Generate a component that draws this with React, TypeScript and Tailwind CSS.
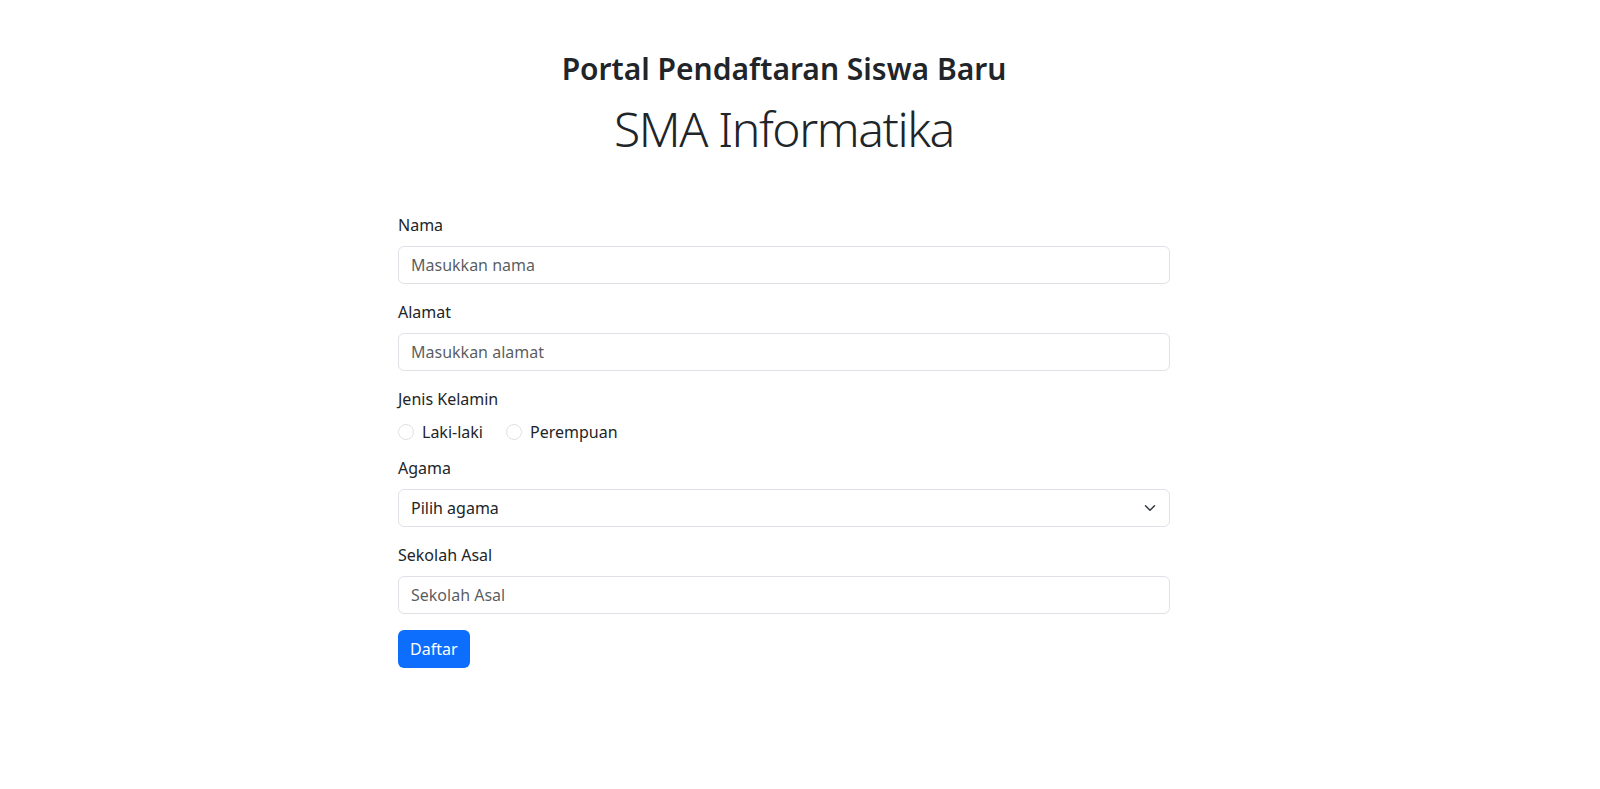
import { useState } from 'react';

const font = { fontFamily: '"Noto Sans", "Liberation Sans", sans-serif' };

function Field({ label, placeholder }: { label: string; placeholder: string }) {
  return (
    <div className="mb-4">
      <label className="mb-[9px] block text-base leading-6 text-[#212529]">{label}</label>
      <input
        type="text"
        placeholder={placeholder}
        className="block h-[38px] w-full rounded-md border border-[#dee2e6] bg-white px-3 text-base text-[#212529] outline-none placeholder:text-[#212529bf]"
      />
    </div>
  );
}

export default function App() {
  const [gender, setGender] = useState('');

  return (
    <div className="min-h-screen bg-white pr-[32px] text-[#212529]" style={font}>
      <div className="mx-auto w-[772px] pt-[49px]">
        <div className="text-center">
          <h3 className="text-[30px] font-semibold leading-[40px]">Portal Pendaftaran Siswa Baru</h3>
          <h1 className="mt-[11px] text-[48px] font-light leading-[58px] tracking-[-1.4px]">SMA Informatika</h1>
        </div>

        <form className="mt-[55px]" onSubmit={(e) => e.preventDefault()}>
          <Field label="Nama" placeholder="Masukkan nama" />
          <Field label="Alamat" placeholder="Masukkan alamat" />

          <div className="mb-3">
            <label className="mb-[9px] block text-base leading-6">Jenis Kelamin</label>
            <div className="flex h-6 items-center">
              {['Laki-laki', 'Perempuan'].map((g) => (
                <label key={g} className="mr-[23px] flex items-center text-base leading-6">
                  <input
                    type="radio"
                    name="gender"
                    checked={gender === g}
                    onChange={() => setGender(g)}
                    className="mr-2 h-4 w-4 appearance-none rounded-full border border-[#dee2e6] bg-white checked:border-[5px] checked:border-[#0d6efd]"
                  />
                  {g}
                </label>
              ))}
            </div>
          </div>

          <div className="mb-4">
            <label className="mb-[9px] block text-base leading-6">Agama</label>
            <div className="relative">
              <select
                defaultValue=""
                className="block h-[38px] w-full appearance-none rounded-md border border-[#dee2e6] bg-white pl-3 pr-9 text-base text-[#212529] outline-none"
              >
                <option value="">Pilih agama</option>
                <option>Islam</option>
                <option>Kristen</option>
                <option>Katolik</option>
                <option>Hindu</option>
                <option>Buddha</option>
                <option>Konghucu</option>
              </select>
              <svg
                viewBox="0 0 16 16"
                className="pointer-events-none absolute right-3 top-1/2 h-3 w-4 -translate-y-1/2"
                fill="none"
                stroke="#343a40"
                strokeWidth="2"
                strokeLinecap="round"
                strokeLinejoin="round"
              >
                <path d="m2 5 6 6 6-6" />
              </svg>
            </div>
          </div>

          <Field label="Sekolah Asal" placeholder="Sekolah Asal" />

          <button
            type="submit"
            className="h-[38px] rounded-md bg-[#0d6efd] px-3 text-base text-white"
          >
            Daftar
          </button>
        </form>
      </div>
    </div>
  );
}
